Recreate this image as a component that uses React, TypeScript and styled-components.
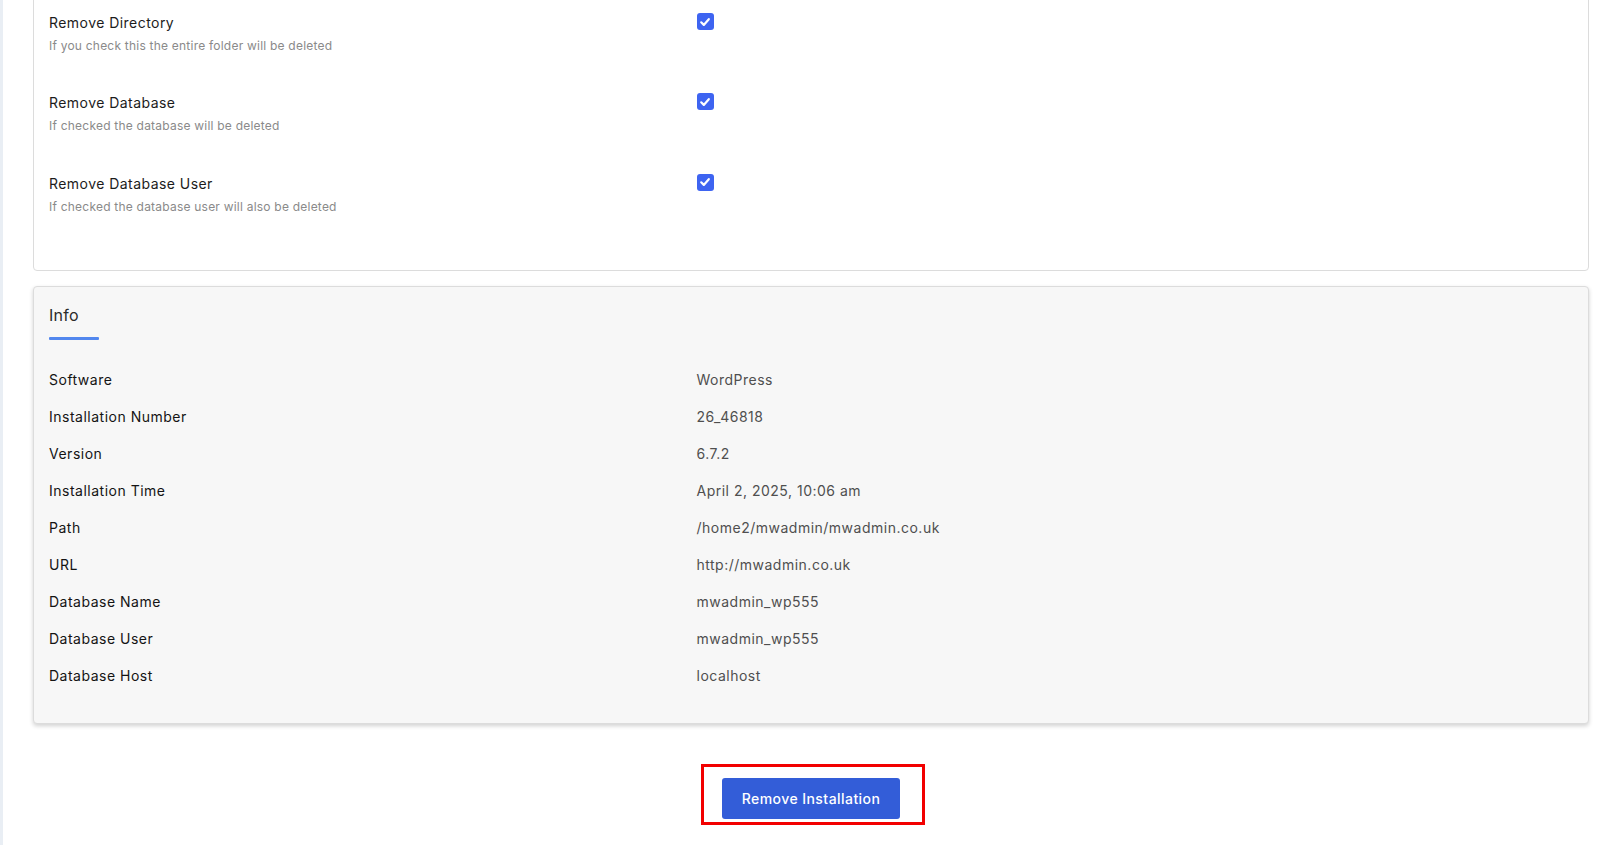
import styled, { createGlobalStyle } from "styled-components";

const GlobalStyle = createGlobalStyle`
  html, body {
    margin: 0;
    padding: 0;
    background: #ffffff;
    overflow: hidden;
  }
  body {
    font-family: Inter, "Open Sans", "Liberation Sans", sans-serif;
    color: #212529;
  }
`;

const options = [
  { title: "Remove Directory", hint: "If you check this the entire folder will be deleted" },
  { title: "Remove Database", hint: "If checked the database will be deleted" },
  { title: "Remove Database User", hint: "If checked the database user will also be deleted" },
];

const info = [
  ["Software", "WordPress"],
  ["Installation Number", "26_46818"],
  ["Version", "6.7.2"],
  ["Installation Time", "April 2, 2025, 10:06 am"],
  ["Path", "/home2/mwadmin/mwadmin.co.uk"],
  ["URL", "http://mwadmin.co.uk"],
  ["Database Name", "mwadmin_wp555"],
  ["Database User", "mwadmin_wp555"],
  ["Database Host", "localhost"],
];

const Checkbox = () => (
  <CheckBox>
    <svg width="12" height="12" viewBox="0 0 12 12">
      <path d="M2.2 6.3 L4.8 8.9 L9.8 3.2" fill="none" stroke="#fff" strokeWidth="2.2" strokeLinecap="round" strokeLinejoin="round" />
    </svg>
  </CheckBox>
);

const App = () => {
  return (
    <Page>
      <GlobalStyle />
      <Content>
        <OptionsCard>
          {options.map((o) => (
            <OptionRow key={o.title}>
              <Cell>
                <OptionTitle>{o.title}</OptionTitle>
                <OptionHint>{o.hint}</OptionHint>
              </Cell>
              <Cell>
                <Checkbox />
              </Cell>
            </OptionRow>
          ))}
        </OptionsCard>

        <InfoCard>
          <InfoHead>
            <InfoTitle>Info</InfoTitle>
            <TitleBar />
          </InfoHead>
          <InfoList>
            {info.map(([label, value]) => (
              <InfoRow key={label}>
                <Label>{label}</Label>
                <Value>{value}</Value>
              </InfoRow>
            ))}
          </InfoList>
        </InfoCard>

        <Actions>
          <Highlight>
            <PrimaryButton>Remove Installation</PrimaryButton>
          </Highlight>
        </Actions>
      </Content>
    </Page>
  );
};

export default App;

const Page = styled.div`
  display: flex;
  min-height: 845px;
  border-left: 3px solid #e9eef4;
`;

const Content = styled.main`
  flex: 1;
  padding: 0 26px 0 30px;
`;

const Card = styled.section`
  border: 1px solid #dcdcdc;
  border-radius: 4px;
`;

const OptionsCard = styled(Card)`
  margin-top: -24px;
  padding: 35px 0 54px;
  background: #ffffff;
  display: flex;
  flex-direction: column;
  gap: 37.3px;
`;

const OptionRow = styled.div`
  display: grid;
  grid-template-columns: 5fr 7fr;
  align-items: start;
`;

const Cell = styled.div`
  padding: 0 15px;
`;

const OptionTitle = styled.div`
  font-size: 14px;
  line-height: 21px;
  letter-spacing: 0.45px;
  color: #1c1c1c;
  margin-bottom: 4px;
`;

const OptionHint = styled.div`
  font-size: 12px;
  line-height: 18px;
  letter-spacing: 0.22px;
  color: #8a8a8a;
`;

const CheckBox = styled.span`
  display: flex;
  align-items: center;
  justify-content: center;
  width: 17px;
  height: 17px;
  margin-top: 1px;
  border-radius: 3px;
  background: #3e64f1;
`;

const InfoCard = styled(Card)`
  margin-top: 15px;
  padding: 16px 0 29px;
  background: #f7f7f7;
  box-shadow: 0 2px 4px rgba(0, 0, 0, 0.18);
`;

const InfoHead = styled.div`
  padding: 0 15px;
`;

const InfoTitle = styled.h3`
  margin: 0;
  font-size: 16px;
  line-height: 24px;
  font-weight: 400;
  letter-spacing: 0.3px;
  color: #2b2b2b;
`;

const TitleBar = styled.div`
  width: 50px;
  height: 3px;
  margin-top: 10px;
  background: #5287ee;
  border-radius: 1px;
`;

const InfoList = styled.div`
  margin-top: 21px;
`;

const InfoRow = styled.div`
  display: grid;
  grid-template-columns: 5fr 7fr;
  padding: 8px 0;
  font-size: 14px;
  line-height: 21px;
  letter-spacing: 0.5px;
`;

const Label = styled.div`
  padding: 0 15px;
  color: #141414;
`;

const Value = styled.div`
  padding: 0 15px;
  color: #4f4f4f;
`;

const Actions = styled.div`
  display: flex;
  justify-content: center;
  margin-top: 40px;
`;

const Highlight = styled.div`
  display: inline-flex;
  margin-left: 4px;
  padding: 11px 22px 3px 18px;
  border: 3px solid #f20000;
`;

const PrimaryButton = styled.button`
  width: 178px;
  height: 41px;
  border: none;
  border-radius: 3px;
  background: #335dd8;
  color: #ffffff;
  font-family: inherit;
  font-size: 14px;
  font-weight: 500;
  letter-spacing: 0.45px;
  cursor: pointer;
`;
